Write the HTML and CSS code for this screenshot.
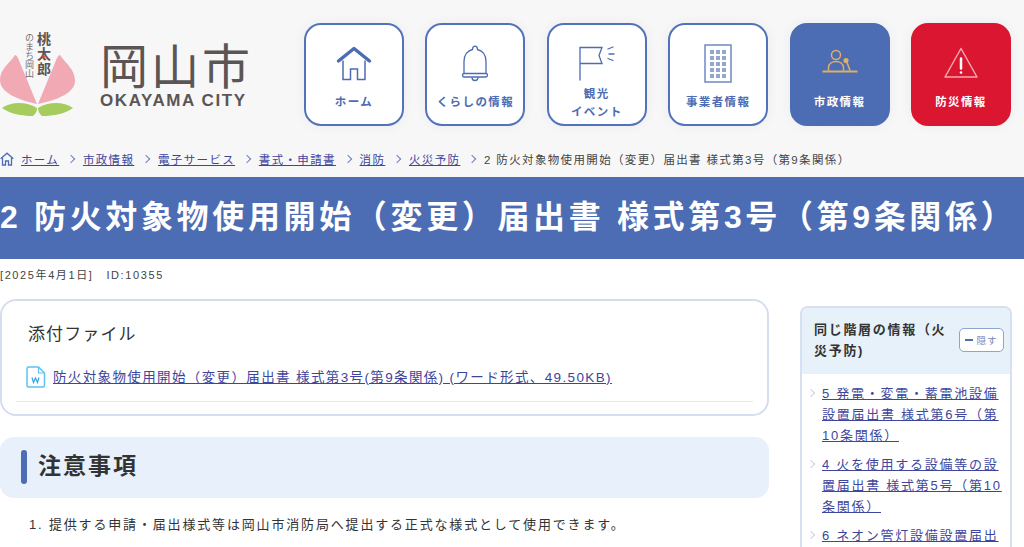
FILE: index.html
```html
<!DOCTYPE html>
<html lang="ja">

<head>
    <meta charset="UTF-8">
    <title>2 防火対象物使用開始（変更）届出書 様式第3号（第9条関係）</title>
    <link rel="stylesheet" href="styles.css">
</head>

<body>
    <header class="site-header">
        <div class="header-top">
            <a class="logo" href="#">
                <div class="logo-mark">
                    <svg width="76" height="64" viewBox="0 0 76 64">
                        <path d="M15 1C9 10 0 15 0 26c0 13 19 20 37 24L18 4C17 2 16 1 15 1z" fill="#f1a9b4" />
                        <path d="M60 1c6 9 15 14 15 26 0 12-18 19-37 23L57 4c1-2 2-3 3-3z" fill="#f1a9b4" />
                        <path d="M2 54c10-7 25-6 35 0 0 4-2 6-4 8C22 62 10 60 2 54z" fill="#a5cc5c" />
                        <path d="M73 54c-10-7-25-6-35 0 0 4 2 6 4 8 11 0 23-2 31-8z" fill="#a5cc5c" />
                    </svg>
                    <span class="logo-copy">のまち岡山</span>
                    <span class="logo-name">桃太郎</span>
                    <i class="logo-dot"></i>
                </div>
                <div class="logo-text">
                    <span class="logo-ja">岡山市</span>
                    <span class="logo-en">OKAYAMA CITY</span>
                </div>
            </a>

            <nav class="main-nav">
                <a class="nav-btn" href="#">
                    <svg width="36" height="36" viewBox="0 0 36 36" fill="none" stroke="#4c6cb3">
                        <path d="M2.500 15.500 18 3l15.500 12.500" stroke-width="3.500" stroke-linejoin="round" stroke-linecap="round" />
                        <path d="M7 15v19h7.500V23.500h7V34H29V15" stroke-width="1.500" />
                    </svg>
                    <span>ホーム</span>
                </a>
                <a class="nav-btn" href="#">
                    <svg width="36" height="38" viewBox="0 0 36 38" fill="none" stroke="#4c6cb3" stroke-width="1.300">
                        <path d="M7 29V17C7 10 11 6 15.500 5c0-4.500 5-4.500 5 0C25 6 29 10 29 17v12" />
                        <rect x="5.500" y="29" width="25" height="3.500" rx="1.700" />
                        <path d="M15 33c0 4 6 4 6 0" />
                    </svg>
                    <span>くらしの情報</span>
                </a>
                <a class="nav-btn nav-btn-two" href="#">
                    <svg width="38" height="36" viewBox="0 0 38 36" fill="none" stroke="#4c6cb3" stroke-width="1.300">
                        <path d="M2 35V2h22l-3 8 3 8H2" />
                        <path d="M30 3.500l5-2M31 8.500h5M30 13l5 2" stroke-linecap="round" />
                    </svg>
                    <span>観光<br>イベント</span>
                </a>
                <a class="nav-btn" href="#">
                    <svg width="28" height="39" viewBox="0 0 28 39" fill="none" stroke="#4c6cb3">
                        <rect x="1" y="1" width="26" height="37" stroke-width="1.500" opacity="0.8" />
                        <path d="M6 8h16M6 14h16M6 20h16M6 26h16M6 32h16" stroke-width="4" stroke-dasharray="4 2" opacity="0.6" />
                    </svg>
                    <span>事業者情報</span>
                </a>
                <a class="nav-btn nav-btn-blue" href="#">
                    <svg width="36" height="36" viewBox="0 0 36 36" fill="none" stroke="#dfb064" stroke-width="1.500">
                        <circle cx="14" cy="9.500" r="4.500" />
                        <path d="M6.500 25v-3c0-8 15-8 15 0v3" />
                        <path d="M0.500 26h35" stroke-width="2" />
                        <circle cx="24" cy="15" r="1.800" fill="#dfb064" />
                        <path d="M25 17l3 8" />
                    </svg>
                    <span>市政情報</span>
                </a>
                <a class="nav-btn nav-btn-red" href="#">
                    <svg width="36" height="36" viewBox="0 0 36 36" fill="none" stroke="#f3a7b0" stroke-width="1.500" stroke-linejoin="round">
                        <path d="M18 3 34 31.500H2z" />
                        <path d="M18 13v10" stroke="#fff" stroke-width="2.500" stroke-linecap="round" />
                        <circle cx="18" cy="27" r="1.300" fill="#fff" stroke="none" />
                    </svg>
                    <span>防災情報</span>
                </a>
            </nav>
        </div>

        <div class="breadcrumb">
            <svg class="crumb-home" width="14" height="14" viewBox="0 0 14 14" fill="none" stroke="#4c6cb3" stroke-width="1.300">
                <path d="M.7 6.800 7 1.200l6.300 5.600" />
                <path d="M2.500 6v7h3V9h3v4h3V6" />
            </svg>
            <a href="#">ホーム</a><i class="crumb-sep"></i>
            <a href="#">市政情報</a><i class="crumb-sep"></i>
            <a href="#">電子サービス</a><i class="crumb-sep"></i>
            <a href="#">書式・申請書</a><i class="crumb-sep"></i>
            <a href="#">消防</a><i class="crumb-sep"></i>
            <a href="#">火災予防</a><i class="crumb-sep"></i>
            <span class="crumb-current">2 防火対象物使用開始（変更）届出書 様式第3号（第9条関係）</span>
        </div>
    </header>

    <h1 class="page-title">2 防火対象物使用開始（変更）届出書 様式第3号（第9条関係）</h1>

    <p class="page-meta">[2025年4月1日]<span class="page-id">ID:10355</span></p>

    <div class="page-body">
        <main class="content">
            <section class="file-card">
                <h2>添付ファイル</h2>
                <p class="file-row">
                    <svg width="20" height="22" viewBox="0 0 20 22" fill="none">
                        <path d="M2.500 1h10l6 6v12.500a1.500 1.500 0 0 1-1.500 1.500H2.500A1.500 1.500 0 0 1 1 19.500v-17A1.500 1.500 0 0 1 2.500 1z" stroke="#5cc2f0" stroke-width="1.500" />
                        <path d="M12.500 1v6h6" stroke="#5cc2f0" stroke-width="1.200" />
                        <path d="M6 11.500l1.500 5 2-4.500 2 4.500 1.500-5" stroke="#3aa8e6" stroke-width="1.300" />
                    </svg>
                    <a href="#">防火対象物使用開始（変更）届出書 様式第3号(第9条関係) (ワード形式、49.50KB)</a>
                </p>
            </section>

            <h2 class="section-head">注意事項</h2>

            <ol class="notes">
                <li>提供する申請・届出様式等は岡山市消防局へ提出する正式な様式として使用できます。</li>
            </ol>
        </main>

        <aside class="side-box">
            <div class="side-head">
                <h2>同じ階層の情報（火災予防)</h2>
                <button class="side-toggle"><i></i>隠す</button>
            </div>
            <ul class="side-list">
                <li><a href="#">5 発電・変電・蓄電池設備設置届出書 様式第6号（第10条関係）</a></li>
                <li><a href="#">4 火を使用する設備等の設置届出書 様式第5号（第10条関係）</a></li>
                <li><a href="#">6 ネオン管灯設備設置届出</a></li>
            </ul>
        </aside>
    </div>
</body>

</html>
```

FILE: styles.css
```css
* {
    box-sizing: border-box;
}

html,
body {
    height: 547px;
    overflow: hidden;
}

body {
    margin: 0;
    font-family: "Liberation Sans", "Noto Sans CJK JP", sans-serif;
    background: #fff;
    color: #333;
}

a {
    color: #3d459c;
}

.site-header {
    height: 177px;
    background: #f7f7f8;
}

.header-top {
    display: flex;
    height: 147px;
}

.logo {
    display: flex;
    width: 304px;
    padding-top: 32px;
    text-decoration: none;
}

.logo-mark {
    position: relative;
    width: 100px;
    padding-top: 22px;
}

.logo-mark svg {
    display: block;
}

.logo-copy,
.logo-name {
    position: absolute;
    writing-mode: vertical-rl;
    font-family: "Noto Sans CJK JP", sans-serif;
    line-height: 1;
}

.logo-copy {
    top: 1px;
    left: 25px;
    font-size: 9px;
    color: #77716f;
}

.logo-name {
    top: 0;
    left: 37px;
    font-size: 14px;
    font-weight: 700;
    letter-spacing: 1px;
    color: #5b5655;
}

.logo-dot {
    position: absolute;
    top: 23px;
    left: 41.500px;
    width: 3px;
    height: 3px;
    background: #e5384a;
    border-radius: 50%;
}

.logo-text {
    display: flex;
    flex-direction: column;
    padding-top: 3px;
    color: #5b5655;
}

.logo-ja {
    font-family: "Noto Sans CJK JP", sans-serif;
    font-size: 48px;
    line-height: 56px;
    letter-spacing: 3px;
    white-space: nowrap;
}

.logo-en {
    font-size: 17px;
    font-weight: 700;
    line-height: 19px;
    letter-spacing: 1.600px;
    white-space: nowrap;
}

.main-nav {
    display: flex;
    gap: 21.400px;
    padding-top: 23px;
}

.nav-btn {
    display: flex;
    flex-direction: column;
    align-items: center;
    width: 100px;
    height: 103px;
    padding-top: 19px;
    background: #fff;
    border: 2px solid #5273bb;
    border-radius: 17px;
    box-shadow: 0 0 12px rgba(60, 70, 110, 0.06);
    color: #4c6cb3;
    font-size: 11.500px;
    font-weight: 700;
    letter-spacing: 1.400px;
    text-align: center;
    text-decoration: none;
}

.nav-btn svg {
    height: 39px;
    flex: none;
}

.nav-btn span {
    margin-top: 10px;
    line-height: 18px;
}

.nav-btn-two span {
    margin-top: 2px;
}

.nav-btn-blue {
    background: #4c6cb3;
    border-color: #4c6cb3;
    color: #fff;
}

.nav-btn-red {
    background: #da1631;
    border-color: #da1631;
    color: #fff;
}

.breadcrumb {
    display: flex;
    align-items: center;
    height: 24px;
    font-size: 11.500px;
    letter-spacing: 1.350px;
    white-space: nowrap;
}

.crumb-home {
    flex: none;
    margin-right: 7px;
}

.crumb-sep {
    flex: none;
    width: 6px;
    height: 6px;
    margin: 0 8.700px 0 9px;
    border-top: 1.500px solid #6b83bd;
    border-right: 1.500px solid #6b83bd;
    transform: rotate(45deg);
}

.crumb-current {
    color: #444;
    font-size: 11.500px;
    letter-spacing: 1.350px;
}

.page-title {
    height: 82px;
    margin: 0;
    background: #4c6cb3;
    color: #fff;
    font-size: 32px;
    font-weight: 700;
    line-height: 81px;
    letter-spacing: 3.650px;
    white-space: nowrap;
    overflow: hidden;
}

.page-meta {
    margin: 0;
    height: 40px;
    padding-top: 9px;
    font-size: 11px;
    line-height: 14px;
    letter-spacing: 1.600px;
    color: #444;
}

.page-id {
    margin-left: 13px;
}

.page-body {
    display: flex;
    align-items: flex-start;
    gap: 31px;
    padding-right: 12px;
}

.content {
    flex: none;
    width: 769px;
}

.file-card {
    height: 117px;
    padding: 21px 14px 0 14px;
    background: #fff;
    border: 2px solid #d6deee;
    border-radius: 16px;
}

.file-card h2 {
    margin: 0 0 0 12px;
    font-size: 17px;
    font-weight: 400;
    line-height: 26px;
    letter-spacing: 1.100px;
}

.file-row {
    display: flex;
    align-items: center;
    gap: 7px;
    margin: 18px 0 0;
    padding: 0 0 13px 10px;
    border-bottom: 1px solid #e4e8f0;
    font-size: 13.500px;
    line-height: 21px;
    letter-spacing: 1.370px;
}

.section-head {
    position: relative;
    height: 61px;
    margin: 21px 0 0;
    padding-left: 38px;
    background: #e8f0fc;
    border-radius: 14px;
    font-size: 23px;
    font-weight: 700;
    line-height: 59px;
    letter-spacing: 2px;
}

.section-head::before {
    content: "";
    position: absolute;
    top: 13px;
    left: 21px;
    width: 6px;
    height: 34px;
    background: #4c6cb3;
    border-radius: 3px;
}

.notes {
    margin: 15px 0 0;
    padding: 0 0 0 29px;
    font-size: 13px;
    line-height: 24px;
    letter-spacing: 1.830px;
    list-style-position: inside;
}

.side-box {
    flex: none;
    width: 212px;
    margin-top: 7px;
    border: 2px solid #d6e0f0;
    border-bottom: none;
    border-radius: 8px 8px 0 0;
    overflow: hidden;
}

.side-head {
    display: flex;
    align-items: center;
    gap: 4px;
    height: 66px;
    padding: 0 6px 2px 12px;
    background: #e6f1f9;
}

.side-head h2 {
    flex: 1;
    margin: 0;
    font-size: 13px;
    font-weight: 700;
    line-height: 21px;
    letter-spacing: 1.700px;
}

.side-toggle {
    display: flex;
    align-items: center;
    justify-content: center;
    gap: 3px;
    flex: none;
    width: 45px;
    height: 24px;
    padding: 0;
    background: #fff;
    border: 1px solid #8ea3d2;
    border-radius: 5px;
    color: #6d86bf;
    font-family: inherit;
    font-size: 9.500px;
    letter-spacing: 1px;
}

.side-toggle i {
    width: 8px;
    height: 2px;
    background: #4c6cb3;
}

.side-list {
    margin: 0;
    padding: 9px 0 0 20px;
    list-style: none;
    font-size: 13px;
    line-height: 21px;
    letter-spacing: 1.750px;
}

.side-list li {
    position: relative;
    margin-bottom: 8px;
}

.side-list li::before {
    content: "";
    position: absolute;
    top: 7px;
    left: -14px;
    width: 5px;
    height: 5px;
    border-top: 1.500px solid #c6d2e6;
    border-right: 1.500px solid #c6d2e6;
    transform: rotate(45deg);
}
```
